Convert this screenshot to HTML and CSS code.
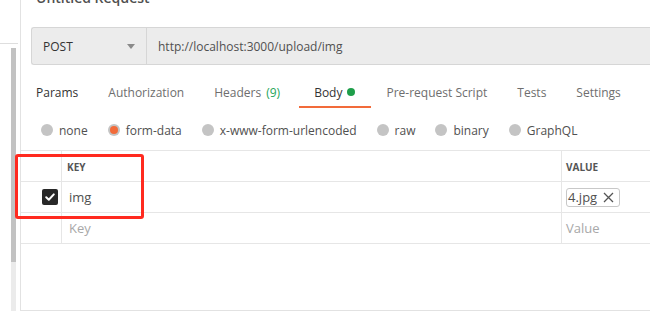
FILE: index.html
```html
<!DOCTYPE html>
<html lang="en">
<head>
    <meta charset="UTF-8">
    <title>Untitled Request</title>
    <link rel="stylesheet" href="styles.css">
</head>
<body>
    <div class="app">
        <!-- Left sidebar with scrollbar -->
        <div class="sidebar">
            <div class="sidebar-head"></div>
            <div class="scrollbar">
                <div class="scroll-thumb"></div>
            </div>
        </div>

        <div class="main">
            <div class="request-title">Untitled Request</div>

            <div class="url-bar">
                <div class="method">
                    <span>POST</span>
                    <span class="caret"></span>
                </div>
                <div class="url">http://localhost:3000/upload/img</div>
            </div>

            <div class="tabs">
                <span class="tab tab-dark">Params</span>
                <span class="tab">Authorization</span>
                <span class="tab tab-headers">Headers<span class="count">(9)</span></span>
                <span class="tab tab-dark active">Body <span class="dot"></span></span>
                <span class="tab">Pre-request Script</span>
                <span class="tab">Tests</span>
                <span class="tab">Settings</span>
            </div>

            <div class="body-types">
                <label class="radio"><span class="radio-circle"></span>none</label>
                <label class="radio"><span class="radio-circle checked"></span>form-data</label>
                <label class="radio"><span class="radio-circle"></span>x-www-form-urlencoded</label>
                <label class="radio"><span class="radio-circle"></span>raw</label>
                <label class="radio"><span class="radio-circle"></span>binary</label>
                <label class="radio"><span class="radio-circle"></span>GraphQL</label>
            </div>

            <div class="kv-table">
                <div class="cell cell-check"></div>
                <div class="cell cell-key head">KEY</div>
                <div class="cell cell-value head">VALUE</div>

                <div class="cell cell-check">
                    <span class="checkbox">
                        <svg width="12" height="12" viewBox="0 0 12 12"><path d="M2.2 6.3 L4.8 8.8 L9.8 3.4" fill="none" stroke="#fff" stroke-width="2" stroke-linecap="round" stroke-linejoin="round"/></svg>
                    </span>
                </div>
                <div class="cell cell-key">img</div>
                <div class="cell cell-value">
                    <span class="file-chip">4.jpg
                        <svg width="11" height="11" viewBox="0 0 11 11"><path d="M1 1 L10 10 M10 1 L1 10" stroke="#555" stroke-width="1.3"/></svg>
                    </span>
                </div>

                <div class="cell cell-check"></div>
                <div class="cell cell-key placeholder">Key</div>
                <div class="cell cell-value placeholder">Value</div>
            </div>
        </div>

        <div class="highlight"></div>
    </div>
</body>
</html>
```

FILE: styles.css
```css
/* Global Styles */
body {
    margin: 0;
    font-family: 'Open Sans', 'Noto Sans', sans-serif;
    font-size: 12px;
    color: #505050;
    background: #fff;
}

.app {
    position: relative;
    display: flex;
    width: 650px;
    height: 311px;
    overflow: hidden;
}

/* Sidebar */
.sidebar {
    width: 20px;
    flex-shrink: 0;
    display: flex;
    flex-direction: column;
}

.sidebar-head {
    height: 43px;
    border-bottom: 1px solid #dedede;
    margin-right: 2px;
}

.scrollbar {
    flex: 1;
    width: 5px;
    margin: 4px 0 0 11px;
    background-color: #ebebeb;
}

.scroll-thumb {
    height: 214px;
    background-color: #c2c2c2;
}

/* Main panel */
.main {
    flex: 1;
    min-width: 0;
    border-left: 1px solid #e2e2e2;
    border-bottom: 1px solid #e2e2e2;
    display: flex;
    flex-direction: column;
}

.request-title {
    margin: -12px 0 0 15px;
    height: 20px;
    line-height: 20px;
    font-size: 14px;
    font-weight: 600;
    color: #505050;
    white-space: nowrap;
}

/* URL bar */
.url-bar {
    display: flex;
    height: 36px;
    margin: 19px 0 0 10px;
    background-color: #ececec;
    border: 1px solid #d6d6d6;
    border-right: none;
    border-radius: 3px 0 0 3px;
}

.method {
    width: 103px;
    padding: 0 0 0 11px;
    display: flex;
    align-items: center;
    justify-content: space-between;
    border-right: 1px solid #d6d6d6;
    color: #333;
}

.caret {
    width: 0;
    height: 0;
    margin-right: 11px;
    border-left: 4px solid transparent;
    border-right: 4px solid transparent;
    border-top: 5px solid #8a8a8a;
}

.url {
    display: flex;
    align-items: center;
    padding-left: 11px;
    color: #505050;
}

/* Tabs */
.tabs {
    display: flex;
    margin-top: 15px;
    height: 28px;
}

.tab {
    display: flex;
    align-items: center;
    padding: 0 15px 2px;
    color: #6e6e6e;
    white-space: nowrap;
    border-bottom: 2px solid transparent;
    height: 24px;
}

.tab-dark {
    color: #333;
}

.tab-headers {
    padding-right: 19px;
}

.tab.active {
    border-bottom-color: #f26b3a;
    padding-right: 16px;
}

.count {
    color: #26a55a;
    margin-left: 5px;
}

.dot {
    display: inline-block;
    width: 8px;
    height: 8px;
    margin-left: 5px;
    border-radius: 50%;
    background-color: #1e9e4a;
}

/* Body type radios */
.body-types {
    display: flex;
    align-items: center;
    gap: 20px;
    height: 40px;
    padding: 2px 0 0 20px;
}

.radio {
    display: flex;
    align-items: center;
    gap: 6px;
    color: #505050;
}

.radio-circle {
    width: 12px;
    height: 12px;
    border-radius: 50%;
    background-color: #c4c4c4;
    position: relative;
}

.radio-circle.checked::after {
    content: '';
    position: absolute;
    left: 2px;
    top: 2px;
    width: 8px;
    height: 8px;
    border-radius: 50%;
    background-color: #f26b3a;
}

/* Key / value table */
.kv-table {
    display: grid;
    grid-template-columns: 41px 500px 1fr;
    grid-auto-rows: 31px;
    border-top: 1px solid #e6e6e6;
}

.cell {
    display: flex;
    align-items: center;
    border-bottom: 1px solid #e6e6e6;
    white-space: nowrap;
    font-size: 13px;
}

.cell-check,
.cell-key {
    border-right: 1px solid #e6e6e6;
}

.cell-check {
    justify-content: flex-end;
    padding-right: 3px;
}

.cell-key {
    padding-left: 7px;
}

.cell-value {
    padding-left: 4px;
}

.head {
    font-size: 10px;
    font-weight: 700;
    color: #555;
    padding-top: 1px;
}

.cell-key.head {
    padding-left: 5px;
}

.placeholder {
    color: #a8a8a8;
}

.checkbox {
    display: flex;
    align-items: center;
    justify-content: center;
    width: 16px;
    height: 16px;
    border-radius: 2px;
    background-color: #282828;
}

.file-chip {
    display: flex;
    align-items: center;
    gap: 6px;
    height: 17px;
    padding: 0 5px 0 1px;
    border: 1px solid #c8c8c8;
    border-radius: 3px;
    color: #505050;
}

/* Red annotation box */
.highlight {
    position: absolute;
    left: 15px;
    top: 154px;
    width: 123px;
    height: 59px;
    border: 3px solid #ff2a1f;
    border-radius: 3px;
}
```
